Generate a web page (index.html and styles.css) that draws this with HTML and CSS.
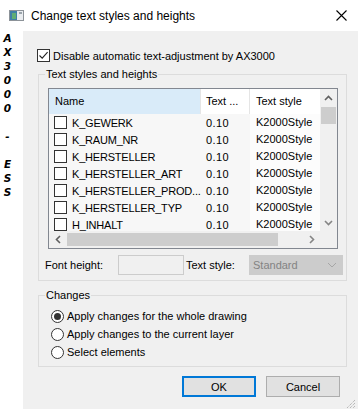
FILE: index.html
```html
<!DOCTYPE html>
<html lang="en">
<head>
    <meta charset="UTF-8">
    <meta name="viewport" content="width=device-width, initial-scale=1.0">
    <title>Change text styles and heights</title>
    <link rel="stylesheet" href="styles.css">
</head>
<body>
    <div id="titlebar">
        <svg class="appicon" width="15" height="11" viewBox="0 0 15 11">
            <rect x="0.5" y="0.5" width="14" height="10" fill="#e9ecef" stroke="#8c9298"/>
            <rect x="1" y="1" width="7" height="9" fill="#3f7fa6"/>
            <rect x="3" y="3" width="4" height="6" fill="#5fae74"/>
            <rect x="10" y="2" width="3" height="2" fill="#9aa3ab"/>
        </svg>
        <span class="title">Change text styles and heights</span>
        <svg class="close" width="11" height="11" viewBox="0 0 11 11">
            <path d="M0.5 0.5 L10.5 10.5 M10.5 0.5 L0.5 10.5" stroke="#000" stroke-width="1.1"/>
        </svg>
    </div>
    <div id="content">
        <div id="side">
            <div>A</div><div>X</div><div>3</div><div>0</div><div>0</div><div>0</div>
            <div>&nbsp;</div><div>-</div><div>&nbsp;</div>
            <div>E</div><div>S</div><div>S</div>
        </div>
        <div id="dialog">
            <div class="checkrow">
                <span class="checkbox">
                    <svg width="11" height="11" viewBox="0 0 11 11"><path d="M1.5 5.5 L4.2 8.2 L9.6 2.2" fill="none" stroke="#222" stroke-width="1.1"/></svg>
                </span>
                <span>Disable automatic text-adjustment by AX3000</span>
            </div>

            <fieldset class="group">
                <legend>Text styles and heights</legend>
                <div class="gbody styles">
                    <div class="lv">
                        <div class="lvmain">
                            <div class="lvhead">
                                <div class="hcell hot">Name</div><div class="hsep"></div>
                                <div class="hcell c2">Text ...</div><div class="hsep"></div>
                                <div class="hcell c3">Text style</div>
                            </div>
                            <div class="lvrow"><div class="cname"><span class="checkbox"></span><span class="nm">K_GEWERK</span></div><div class="cval">0.10</div><div class="cstyle">K2000Style</div></div>
                            <div class="lvrow"><div class="cname"><span class="checkbox"></span><span class="nm">K_RAUM_NR</span></div><div class="cval">0.10</div><div class="cstyle">K2000Style</div></div>
                            <div class="lvrow"><div class="cname"><span class="checkbox"></span><span class="nm">K_HERSTELLER</span></div><div class="cval">0.10</div><div class="cstyle">K2000Style</div></div>
                            <div class="lvrow"><div class="cname"><span class="checkbox"></span><span class="nm">K_HERSTELLER_ART</span></div><div class="cval">0.10</div><div class="cstyle">K2000Style</div></div>
                            <div class="lvrow"><div class="cname"><span class="checkbox"></span><span class="nm">K_HERSTELLER_PROD...</span></div><div class="cval">0.10</div><div class="cstyle">K2000Style</div></div>
                            <div class="lvrow"><div class="cname"><span class="checkbox"></span><span class="nm">K_HERSTELLER_TYP</span></div><div class="cval">0.10</div><div class="cstyle">K2000Style</div></div>
                            <div class="lvrow"><div class="cname"><span class="checkbox"></span><span class="nm">H_INHALT</span></div><div class="cval">0.10</div><div class="cstyle">K2000Style</div></div>
                        </div>
                        <div class="vscroll">
                            <div class="arrow">
                                <svg width="9" height="6" viewBox="0 0 9 6"><polyline points="1,5 4.5,1.5 8,5" fill="none" stroke="#606060" stroke-width="1.6"/></svg>
                            </div>
                            <div class="vthumb"></div>
                            <div class="track"></div>
                            <div class="arrow">
                                <svg width="9" height="6" viewBox="0 0 9 6"><polyline points="1,1 4.5,4.5 8,1" fill="none" stroke="#858585" stroke-width="1.6"/></svg>
                            </div>
                        </div>
                        <div class="hscroll">
                            <div class="arrow">
                                <svg width="6" height="9" viewBox="0 0 6 9"><polyline points="5,1 1.5,4.5 5,8" fill="none" stroke="#606060" stroke-width="1.6"/></svg>
                            </div>
                            <div class="hthumb"></div>
                            <div class="track"></div>
                            <div class="arrow">
                                <svg width="6" height="9" viewBox="0 0 6 9"><polyline points="1,1 4.5,4.5 1,8" fill="none" stroke="#858585" stroke-width="1.6"/></svg>
                            </div>
                        </div>
                        <div class="corner"></div>
                    </div>
                    <div class="fontrow">
                        <span class="lbl1">Font height:</span>
                        <div class="input"></div>
                        <span class="lbl2">Text style:</span>
                        <div class="combo">
                            <span>Standard</span>
                            <svg width="10" height="6" viewBox="0 0 10 6"><polyline points="1,1 5,5 9,1" fill="none" stroke="#a6a6a6" stroke-width="1"/></svg>
                        </div>
                    </div>
                </div>
            </fieldset>

            <fieldset class="group changes">
                <legend>Changes</legend>
                <div class="gbody">
                    <div class="radiorow"><span class="radio on"></span><span>Apply changes for the whole drawing</span></div>
                    <div class="radiorow"><span class="radio"></span><span>Apply changes to the current layer</span></div>
                    <div class="radiorow"><span class="radio"></span><span>Select elements</span></div>
                </div>
            </fieldset>

            <div class="buttons">
                <div class="btn default">OK</div>
                <div class="btn">Cancel</div>
            </div>

            <svg class="grip" width="11" height="11" viewBox="0 0 11 11">
                <path d="M10 2 L2 10 M10 5 L5 10 M10 8 L8 10" stroke="#a0a0a0" stroke-width="1" stroke-dasharray="1 1"/>
            </svg>
        </div>
    </div>
</body>
</html>
```

FILE: styles.css
```css
*{
    margin: 0;
    padding: 0;
    box-sizing: border-box;
}
html,body{
    width: 100%;
    height: 100%;
    background-color: #fff;
}
body{
    font-family: "Liberation Sans", Arial, sans-serif;
    font-size: 11px;
    color: #000;
    overflow: hidden;
}
#titlebar{
    display: flex;
    align-items: center;
    height: 31px;
    padding-left: 9px;
    font-size: 12px;
}
.appicon{
    margin-right: 7px;
}
.title{
    flex: 1;
}
.close{
    margin-right: 11px;
}
#content{
    display: flex;
    height: 378px;
}
#side{
    flex-shrink: 0;
    width: 23px;
    padding-right: 8px;
    text-align: center;
    font-family: "DejaVu Sans", sans-serif;
    font-weight: bold;
    font-style: italic;
    font-size: 10.5px;
    line-height: 14px;
}
#dialog{
    position: relative;
    flex: 1;
    min-width: 0;
    background-color: #f0f0f0;
    padding: 18px 11px 0 15px;
}
.checkrow{
    display: flex;
    align-items: center;
    gap: 3px;
    height: 13px;
    margin-left: -1px;
}
.checkbox{
    display: flex;
    align-items: center;
    justify-content: center;
    flex-shrink: 0;
    width: 13px;
    height: 13px;
    border: 1px solid #333;
    background-color: #fff;
}
.group{
    min-width: 0;
    border: 1px solid #dcdcdc;
    margin-top: 4px;
}
.group legend{
    margin-left: 6px;
    padding: 0 1px;
    line-height: 16px;
}
.gbody{
    padding: 4px 0 5px 12px;
}
.gbody.styles{
    padding: 6px 8px 5px 9px;
}
.lv{
    display: grid;
    grid-template-columns: 271px 17px;
    grid-template-rows: 142px 17px;
    width: 290px;
    height: 161px;
    border: 1px solid #828790;
    background-color: #fff;
}
.lvmain{
    overflow: hidden;
    background-color: #f7f7f7;
}
.lvhead{
    display: grid;
    grid-template-columns: 151px 1px 48px 1px 70px;
    height: 25px;
    background-color: #fff;
}
.hcell{
    padding-left: 6px;
    line-height: 25px;
    white-space: nowrap;
    overflow: hidden;
}
.hcell.hot{
    background-color: #d9ebf9;
}
.hcell.c2{
    padding-left: 5px;
}
.hsep{
    background-color: #e5e5e5;
}
.lvrow{
    display: grid;
    grid-template-columns: 152px 49px 70px;
    align-items: center;
    height: 17px;
    white-space: nowrap;
}
.cname{
    display: flex;
    align-items: center;
    gap: 5px;
    padding-left: 5px;
    min-width: 0;
}
.nm{
    letter-spacing: -0.2px;
}
.cval{
    padding-left: 5px;
    letter-spacing: 0.4px;
}
.cstyle{
    height: 17px;
    line-height: 17px;
    padding-left: 6px;
    background-color: #fcfcfc;
    overflow: hidden;
}
.vscroll{
    display: flex;
    flex-direction: column;
    align-items: center;
    background-color: #f0f0f0;
}
.vscroll .arrow{
    display: flex;
    align-items: center;
    justify-content: center;
    width: 17px;
    height: 17px;
}
.vthumb{
    width: 15px;
    height: 17px;
    margin-top: 1px;
    background-color: #cdcdcd;
}
.track{
    flex: 1;
}
.hscroll{
    display: flex;
    align-items: center;
    background-color: #f0f0f0;
}
.hscroll .arrow{
    display: flex;
    align-items: center;
    justify-content: center;
    width: 17px;
    height: 17px;
}
.hthumb{
    width: 211px;
    height: 13px;
    margin-left: 1px;
    background-color: #cdcdcd;
}
.corner{
    background-color: #f0f0f0;
}
.fontrow{
    display: flex;
    align-items: center;
    height: 20px;
    margin-top: 6px;
    margin-left: -3px;
    white-space: nowrap;
}
.lbl1{
    width: 73px;
    flex-shrink: 0;
}
.input{
    width: 66px;
    height: 20px;
    flex-shrink: 0;
    border: 1px solid #cccccc;
    background-color: #f0f0f0;
}
.lbl2{
    width: 65px;
    flex-shrink: 0;
    padding-left: 2px;
}
.combo{
    display: flex;
    align-items: center;
    justify-content: space-between;
    width: 94px;
    height: 20px;
    flex-shrink: 0;
    padding: 0 5px 0 3px;
    border: 1px solid #cccccc;
    background-color: #cccccc;
    color: #838383;
}
.changes{
    margin-top: 6px;
}
.radiorow{
    display: flex;
    align-items: center;
    gap: 3px;
    height: 18px;
}
.radio{
    display: flex;
    align-items: center;
    justify-content: center;
    width: 13px;
    height: 13px;
    border: 1px solid #333;
    border-radius: 50%;
    background-color: #fff;
}
.radio.on::after{
    content: "";
    width: 7px;
    height: 7px;
    border-radius: 50%;
    background-color: #333;
}
.buttons{
    display: flex;
    justify-content: flex-end;
    gap: 10px;
    margin-top: 9px;
    margin-right: 7px;
}
.btn{
    display: flex;
    align-items: center;
    justify-content: center;
    width: 74px;
    height: 21px;
    border: 1px solid #adadad;
    background-color: #e1e1e1;
}
.btn.default{
    border: 2px solid #0078d7;
}
.grip{
    position: absolute;
    right: 2px;
    bottom: 0;
}
```
